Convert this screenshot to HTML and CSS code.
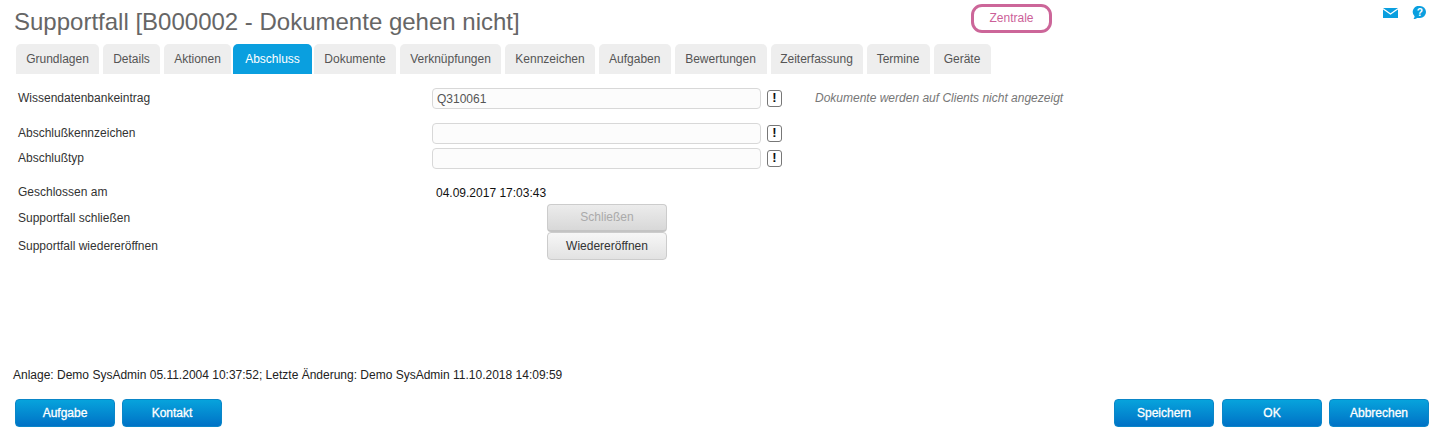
FILE: index.html
```
<!DOCTYPE html>
<html lang="de">
<head>
<meta charset="utf-8">
<title>Supportfall</title>
<link rel="stylesheet" href="styles.css">
</head>
<body>
<div class="page">
  <header class="header">
    <h1 class="title">Supportfall [B000002 - Dokumente gehen nicht]</h1>
    <div class="pill">Zentrale</div>
    <div class="icons">
      <svg class="icon-mail" width="15" height="10" viewBox="0 0 15 10"><path d="M0 0H15L7.500 5.200Z" fill="#0a9fdf"/><path d="M0 1.500L7.500 6.700L15 1.500V10H0Z" fill="#0a9fdf"/></svg>
      <svg class="icon-help" width="15" height="13" viewBox="1 1 14 14"><path d="M8.500 1A6.500 6.500 0 0 1 8.500 14C7 14 5.500 13.800 4 14.600C3 15 2 15 1.200 14.800C2.200 14.200 2.600 13.400 2.700 12A6.500 6.500 0 0 1 8.500 1Z" fill="#0a9fdf"/><text x="8.500" y="11.500" class="help-mark">?</text></svg>
    </div>
  </header>
  <nav class="tabs">
    <a class="tab w-83">Grundlagen</a>
    <a class="tab w-57">Details</a>
    <a class="tab w-67">Aktionen</a>
    <a class="tab active">Abschluss</a>
    <a class="tab w-82 after-active">Dokumente</a>
    <a class="tab w-101">Verknüpfungen</a>
    <a class="tab w-90">Kennzeichen</a>
    <a class="tab w-71">Aufgaben</a>
    <a class="tab w-92">Bewertungen</a>
    <a class="tab w-92">Zeiterfassung</a>
    <a class="tab w-63">Termine</a>
    <a class="tab w-57">Geräte</a>
  </nav>
  <main class="form">
    <section class="group first">
      <div class="row">
        <label class="label">Wissendatenbankeintrag</label>
        <input class="field" type="text" value="Q310061">
        <button class="mark">!</button>
        <span class="note">Dokumente werden auf Clients nicht angezeigt</span>
      </div>
    </section>
    <section class="group second">
      <div class="row">
        <label class="label">Abschlußkennzeichen</label>
        <input class="field" type="text">
        <button class="mark">!</button>
      </div>
      <div class="row">
        <label class="label">Abschlußtyp</label>
        <input class="field" type="text">
        <button class="mark">!</button>
      </div>
    </section>
    <section class="group third">
      <div class="row-text">
        <span class="label">Geschlossen am</span>
        <span class="value">04.09.2017 17:03:43</span>
      </div>
      <div class="row-btn">
        <span class="label">Supportfall schließen</span>
        <button class="grey" disabled>Schließen</button>
      </div>
      <div class="row-btn">
        <span class="label">Supportfall wiedereröffnen</span>
        <button class="grey">Wiedereröffnen</button>
      </div>
    </section>
  </main>
  <footer class="footer">
    <p class="audit">Anlage: Demo SysAdmin 05.11.2004 10:37:52; Letzte Änderung: Demo SysAdmin 11.10.2018 14:09:59</p>
    <div class="actions">
      <div class="action-group">
        <button class="blue">Aufgabe</button>
        <button class="blue">Kontakt</button>
      </div>
      <div class="action-group right">
        <button class="blue">Speichern</button>
        <button class="blue">OK</button>
        <button class="blue">Abbrechen</button>
      </div>
    </div>
  </footer>
</div>
</body>
</html>
```
FILE: styles.css
```
* { box-sizing: border-box; }
html, body { margin: 0; padding: 0; background: #fff; overflow: hidden; }
body { font-family: "Liberation Sans", Arial, sans-serif; font-size: 12px; color: #222; }
.page { width: 1433px; height: 437px; display: flex; flex-direction: column; }

.header { display: flex; align-items: flex-start; height: 44px; padding-left: 14px; }
.title { width: 957px; margin: 8px 0 0; font-size: 24px; line-height: 28px; font-weight: 400; color: #666; white-space: nowrap; }
.pill { width: 81px; height: 29px; margin-top: 4px; border: 3px solid #cc6699; border-radius: 11px; color: #cc5f99; font-size: 12px; line-height: 23px; text-align: center; }
.icons { margin-left: auto; display: flex; align-items: flex-start; gap: 14px; padding: 6px 6px 0 0; }
.icon-mail { margin-top: 2px; }
.help-mark { font: 700 11px "Liberation Sans", Arial, sans-serif; fill: #fff; text-anchor: middle; }

.tabs { display: flex; gap: 4px; height: 30px; padding-left: 16px; }
.tab { height: 30px; background: #eee; color: #555; line-height: 30px; text-align: center; border-radius: 5px 5px 0 0; white-space: nowrap; }
.tab.active { width: 79px; margin-left: -2px; background: #0a9fdf; color: #fff; }
.tab.after-active { margin-left: -2px; }
.w-57 { width: 57px; } .w-63 { width: 63px; } .w-67 { width: 67px; } .w-71 { width: 71.5px; }
.w-82 { width: 82px; } .w-83 { width: 83px; } .w-90 { width: 90px; } .w-92 { width: 92px; } .w-101 { width: 101px; }

.form { padding-left: 18px; }
.group { display: flex; flex-direction: column; }
.group.first { margin-top: 14px; }
.group.second { margin-top: 15px; gap: 5px; }
.group.third { margin-top: 14px; }
.row { display: flex; align-items: center; height: 20px; }
.label { width: 414px; flex: none; color: #333; }
.field { width: 329px; height: 21px; align-self: flex-start; padding: 0 4px; border: 1px solid #d8d8d8; border-radius: 4px; background: #fcfcfc; color: #555; font: 12px "Liberation Sans", Arial, sans-serif; outline: none; }
.mark { width: 15px; height: 17px; margin-left: 6px; padding: 0; border: 1px solid #777; border-radius: 3px; background: #fff; color: #111; font: 700 13px/14px "Liberation Sans", Arial, sans-serif; }
.note { margin-left: 33px; color: #777; font-style: italic; }
.row-text { display: flex; align-items: center; height: 22px; }
.row-text .label { position: relative; top: -1px; }
.value { padding-left: 4px; color: #111; }
.row-btn { display: flex; align-items: flex-start; height: 28px; }
.row-btn .label { width: 529px; line-height: 28px; }
.grey { width: 120px; height: 27.500px; padding: 0; border: 1px solid #ccc; border-radius: 4px; background: linear-gradient(#f7f7f7, #e2e2e2); color: #333; font: 12px "Liberation Sans", Arial, sans-serif; }
.grey:disabled { color: #aaa; background: linear-gradient(#ececec, #d8d8d8); border-bottom: 2px solid #c4c4c4; }

.footer { margin-top: auto; padding-bottom: 10px; }
.audit { margin: 0 0 17px 13px; line-height: 14px; color: #222; }
.actions { display: flex; justify-content: space-between; padding: 0 4px 0 15px; }
.action-group { display: flex; gap: 7px; }
.action-group.right { gap: 8px; }
.action-group.right .blue:last-child { margin-left: -1px; }
.blue { width: 100px; height: 28px; padding: 0; border: 1px solid #0a86c8; border-radius: 4px; background: linear-gradient(#07a3dc, #0072c6); color: #fff; font: 400 12px "Liberation Sans", Arial, sans-serif; -webkit-text-stroke: 0.3px #fff; }
```
